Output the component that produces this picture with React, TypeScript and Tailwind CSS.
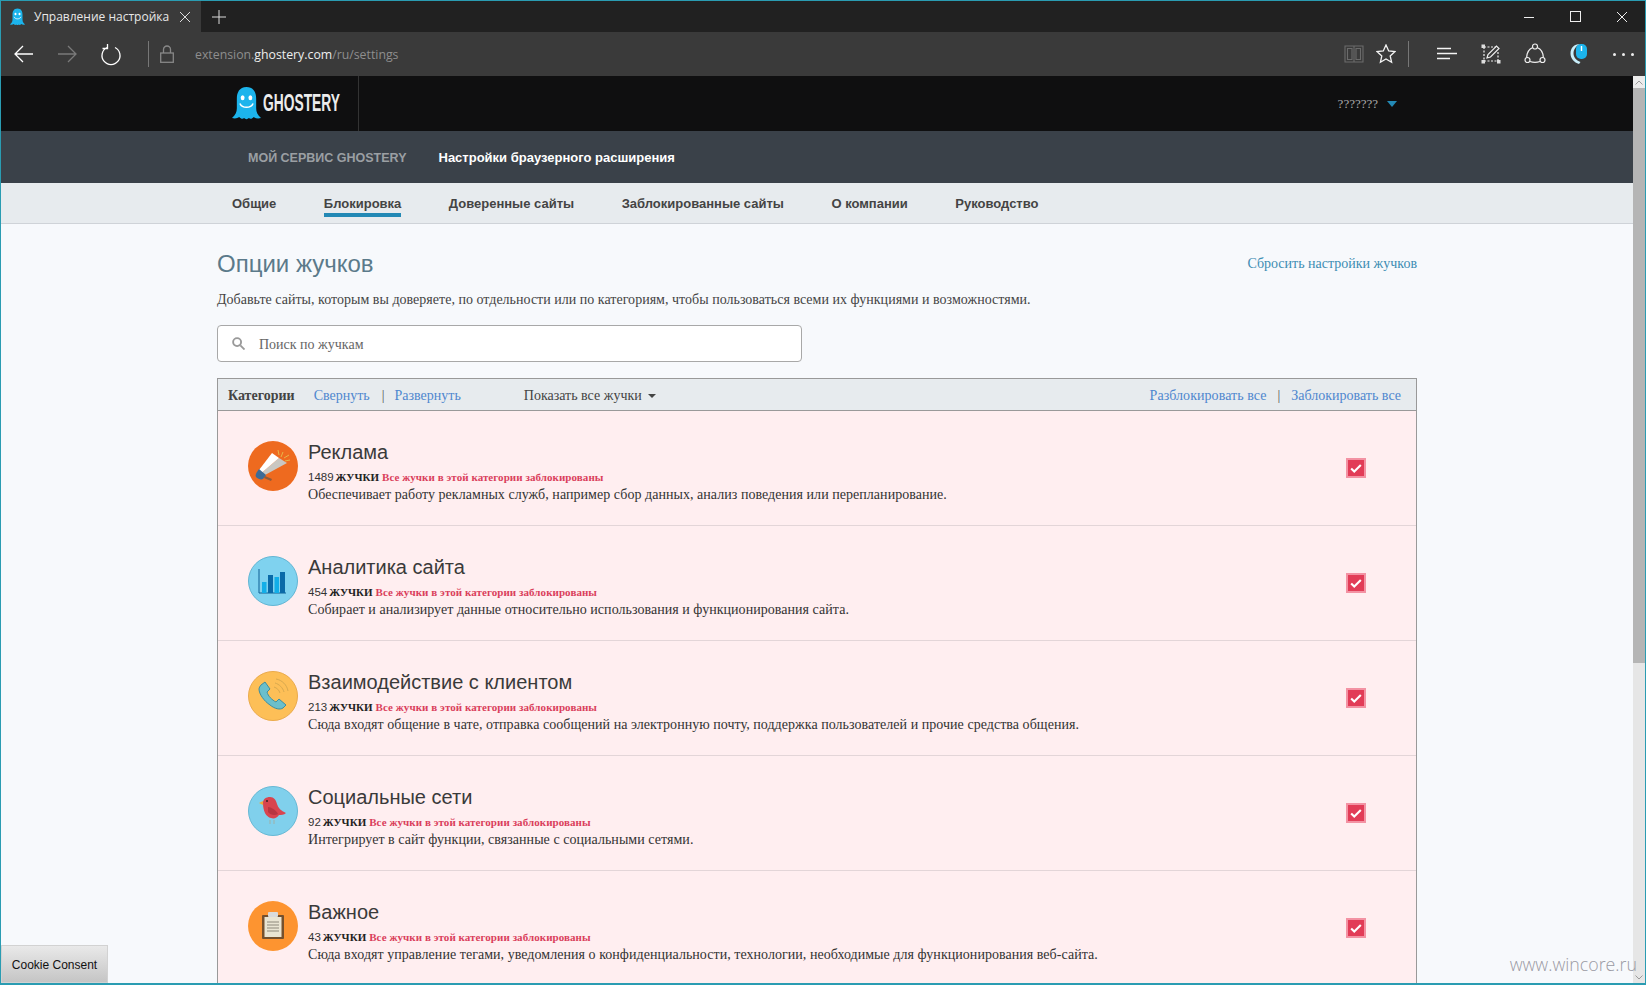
import type { ReactNode } from "react";

const SERIF = "font-['Liberation_Serif',serif]";
const SANS = "font-['Liberation_Sans',sans-serif]";

function GhostLogo({ className }: { className: string }) {
  return (
    <svg viewBox="0 0 30 34" className={className}>
      <path
        d="M15 0C7.5 0 5 6 5 12v10c0 4-1.5 7-5 10 3 .8 5.5.4 7.5-1 1.6 1.8 3.6 2.5 5 1 1.4 1.6 3.4 1.6 5 0 1.4 1.5 3.4.8 5-1 2 1.4 4.5 1.8 7.5 1-3.5-3-5-6-5-10V12C25 6 22.5 0 15 0z"
        fill="#1cb4ec"
      />
      <ellipse cx="11" cy="11" rx="2" ry="2.6" fill="#fff" />
      <ellipse cx="19" cy="11" rx="2" ry="2.6" fill="#fff" />
      <path d="M8.5 17.5c2 4.5 11 4.5 13 0" fill="none" stroke="#fff" strokeWidth="1.6" strokeLinecap="round" />
    </svg>
  );
}

function Stroke({ w, children, className = "" }: { w: number; children: ReactNode; className?: string }) {
  return (
    <svg viewBox={`0 0 ${w} 24`} width={w} height={24} fill="none" stroke="currentColor" strokeWidth="1.3" className={className}>
      {children}
    </svg>
  );
}

function MegaphoneIcon() {
  return (
    <svg viewBox="0 0 50 50" className="w-[50px] h-[50px]">
      <circle cx="25" cy="25" r="25" fill="#ee6a1f" />
      <path d="M31 17l8 5-22 12-3-2.500z" fill="#c9c7c2" />
      <path d="M24 12l7 5-17 14.500-3-2.500z" fill="#fff" />
      <path d="M11 28l7 6-3 4c-2 1-5 0-7-2-1-2 0-4 3-8z" fill="#3d6b96" />
      <path d="M17 35l7 3-1 2-7-3z" fill="#8f5a3a" />
      <path d="M30 9l1 5M35 11l-2 5M41 14l-5 3M42 19l-5 1" stroke="#e7b64a" strokeWidth="1" />
    </svg>
  );
}

function ChartIcon() {
  return (
    <svg viewBox="0 0 50 50" className="w-[50px] h-[50px]">
      <circle cx="25" cy="25" r="24.500" fill="#7fd2ef" stroke="#62b5d3" />
      <path d="M11 13v24h27" fill="none" stroke="#0f5f94" strokeWidth="1" />
      <rect x="14" y="26" width="4.500" height="11" fill="#12aee8" />
      <rect x="20" y="19" width="5" height="18" fill="#0a6aa8" />
      <rect x="26.500" y="21" width="4.500" height="16" fill="#12aee8" />
      <rect x="32" y="16" width="5" height="21" fill="#0a6aa8" />
    </svg>
  );
}

function PhoneIcon() {
  return (
    <svg viewBox="0 0 50 50" className="w-[50px] h-[50px]">
      <circle cx="25" cy="25" r="24.500" fill="#fdbf57" stroke="#eaaa4c" />
      <path
        d="M13 14l4-3 5 7-3 3c1 4 5 8 9 10l3-3 7 6-3 3c-3 2-8 1-13-3-6-4-11-11-11-16 0-1 1-3 2-4z"
        fill="#6bbfcb"
        stroke="#3d8ea0"
        strokeWidth="1"
      />
      <path d="M26 16c3 1 5 3 6 6M27 12c4 1 8 5 9 9M28 8c6 1 11 6 12 12" fill="none" stroke="#d8a94f" strokeWidth="1" />
    </svg>
  );
}

function BirdIcon() {
  return (
    <svg viewBox="0 0 50 50" className="w-[50px] h-[50px]">
      <circle cx="25" cy="25" r="24.500" fill="#80d0ec" stroke="#66b8d4" />
      <path d="M15 17c0-4 3-6 7-6 4 0 6 3 7 7 1 4 4 7 9 9-2 2-5 2-7 2-2 3-5 4-8 3-5-1-8-7-8-15z" fill="#d8444f" />
      <path d="M20 21c3 0 8 3 10 7-3 2-8 1-10-2z" fill="#b83541" />
      <path d="M15 15l-4 2 4 2z" fill="#eeaa3a" />
      <path d="M22 34v4M26 34v4" stroke="#9fb0a8" strokeWidth="1" />
      <circle cx="19" cy="15" r="1" fill="#3a2020" />
    </svg>
  );
}

function ClipboardIcon() {
  return (
    <svg viewBox="0 0 50 50" className="w-[50px] h-[50px]">
      <circle cx="25" cy="25" r="25" fill="#fd9430" />
      <rect x="14" y="14" width="22" height="24" rx="1" fill="#75512e" />
      <rect x="16.500" y="16" width="17" height="20" fill="#e9e5d3" />
      <rect x="20" y="11" width="10" height="5" rx="1" fill="#d9dbdb" />
      <path d="M19 21h12M19 24h12M19 27h12M19 30h12" stroke="#8d8a7d" strokeWidth="1.200" />
    </svg>
  );
}

const categories = [
  { name: "Реклама", count: "1489", desc: "Обеспечивает работу рекламных служб, например сбор данных, анализ поведения или перепланирование.", icon: <MegaphoneIcon /> },
  { name: "Аналитика сайта", count: "454", desc: "Собирает и анализирует данные относительно использования и функционирования сайта.", icon: <ChartIcon /> },
  { name: "Взаимодействие с клиентом", count: "213", desc: "Сюда входят общение в чате, отправка сообщений на электронную почту, поддержка пользователей и прочие средства общения.", icon: <PhoneIcon /> },
  { name: "Социальные сети", count: "92", desc: "Интегрирует в сайт функции, связанные с социальными сетями.", icon: <BirdIcon /> },
  { name: "Важное", count: "43", desc: "Сюда входят управление тегами, уведомления о конфиденциальности, технологии, необходимые для функционирования веб-сайта.", icon: <ClipboardIcon /> },
];

const tabs = ["Общие", "Блокировка", "Доверенные сайты", "Заблокированные сайты", "О компании", "Руководство"];

function CategoryRow({ name, count, desc, icon }: { name: string; count: string; desc: string; icon: ReactNode }) {
  return (
    <div className="h-[115px] shrink-0 flex pl-[30px] pr-[50px] bg-[#ffeef0] border-b border-[#e3d5d8]">
      <div className="mt-[30px] w-[50px] h-[50px] shrink-0">{icon}</div>
      <div className="ml-[10px] flex-1 pt-[29px]">
        <div className={`${SANS} text-[20px] leading-[24px] text-[#3a3a3a]`}>{name}</div>
        <div className="mt-[5px] leading-[16px] h-[16px] flex items-baseline whitespace-nowrap">
          <span className={`${SANS} text-[11.5px] text-[#333]`}>{count}</span>
          <span className={`${SERIF} text-[11px] font-bold text-[#222] ml-[2px]`}>ЖУЧКИ</span>
          <span className={`${SERIF} text-[11px] font-bold text-[#da3f5c] ml-[3px] tracking-[0.06px]`}>
            Все жучки в этой категории заблокированы
          </span>
        </div>
        <div className={`${SERIF} text-[14px] leading-[18px] mt-[1px] text-[#333] whitespace-nowrap tracking-[0.04px]`}>{desc}</div>
      </div>
      <div className="mt-[47px] w-[20px] h-[20px] shrink-0 bg-[#e23c57] border-2 border-[#f392a3] flex items-center justify-center">
        <svg viewBox="0 0 16 16" className="w-[14px] h-[14px]">
          <path d="M2.500 8.500l3.500 3.500 7.500-7.500" fill="none" stroke="#fff" strokeWidth="2.400" />
        </svg>
      </div>
    </div>
  );
}

export default function App() {
  return (
    <div className="relative w-[1646px] h-[985px] overflow-hidden flex flex-col border-x border-t border-b-2 border-[#2a9cb2] bg-[#f7f9fc]">
      {/* Browser tab strip */}
      <div className={`h-[31px] shrink-0 flex items-center bg-[#212121] text-[#e8e8e8] ${SANS}`}>
        <div className="w-[200px] h-full bg-[#3a3a3a] flex items-center pl-[9px]">
          <GhostLogo className="w-[15px] h-[18px] shrink-0" />
          <span className="ml-[9px] font-['Open_Sans',sans-serif] text-[12px] whitespace-nowrap">Управление настройка</span>
          <svg viewBox="0 0 12 12" className="w-[12px] h-[12px] ml-[10px]" stroke="#ddd" strokeWidth="1">
            <path d="M1 1l10 10M11 1L1 11" />
          </svg>
        </div>
        <svg viewBox="0 0 14 14" className="w-[14px] h-[14px] ml-[11px]" stroke="#ddd" strokeWidth="1">
          <path d="M7 0v14M0 7h14" />
        </svg>
        <div className="flex-1" />
        <svg viewBox="0 0 12 12" className="w-[12px] h-[12px] mr-[35px]" stroke="#eee" strokeWidth="1">
          <path d="M1 6.500h10" />
        </svg>
        <svg viewBox="0 0 11 11" className="w-[11px] h-[11px] mr-[35px]" fill="none" stroke="#eee" strokeWidth="1">
          <rect x=".5" y=".5" width="10" height="10" />
        </svg>
        <svg viewBox="0 0 12 12" className="w-[12px] h-[12px] mr-[17px]" stroke="#eee" strokeWidth="1">
          <path d="M1 1l10 10M11 1L1 11" />
        </svg>
      </div>

      {/* Browser toolbar */}
      <div className="h-[44px] shrink-0 flex items-center bg-[#3a3a3a] text-white">
        <Stroke w={24} className="ml-[11px]">
          <path d="M21 12H3M11 4l-8 8 8 8" />
        </Stroke>
        <Stroke w={24} className="ml-[19px] text-[#7a7a7a]">
          <path d="M3 12h18M13 4l8 8-8 8" />
        </Stroke>
        <Stroke w={24} className="ml-[19px]">
          <path d="M8 4.500a9 9 0 1 0 8 0M8.500 1v4.500H3.500" transform="translate(1 1)" />
        </Stroke>
        <div className="ml-[26px] w-px h-[26px] bg-[#777]" />
        <svg viewBox="0 0 14 18" className="w-[14px] h-[18px] ml-[11px]" fill="none" stroke="#888" strokeWidth="1.300">
          <rect x=".7" y="8" width="12.600" height="9.300" />
          <path d="M3.500 8V4.500a3.500 3.500 0 0 1 7 0V8" />
        </svg>
        <div className="ml-[21px] pt-[2px] font-['Open_Sans',sans-serif] text-[12.300px] text-[#8e8e8e] whitespace-nowrap">
          extension.<span className="text-[#eee]">ghostery.com</span>/ru/settings
        </div>
        <div className="flex-1" />
        <svg viewBox="0 0 20 20" className="w-[20px] h-[20px]" fill="none" stroke="#6b6b6b" strokeWidth="1.100">
          <path d="M1 2h18v16H1zM10 2v16M3.500 4.500h4.500v11H3.500zM12 4.500h4.500v11H12z" />
        </svg>
        <svg viewBox="0 0 20 20" className="w-[20px] h-[20px] ml-[12px]" fill="none" stroke="#f4f4f4" strokeWidth="1.300">
          <path d="M10 1l2.700 6 6.300.6-4.800 4.300 1.400 6.400L10 15l-5.600 3.300 1.400-6.400L1 7.600 7.300 7z" />
        </svg>
        <div className="ml-[12px] w-px h-[26px] bg-[#777]" />
        <svg viewBox="0 0 20 14" className="w-[20px] h-[14px] ml-[28px]" stroke="#f4f4f4" strokeWidth="1.300">
          <path d="M0 1.500h14M0 6.500h20M0 11.500h13" />
        </svg>
        <svg viewBox="0 0 20 20" className="w-[20px] h-[20px] ml-[24px]" fill="none" stroke="#eee" strokeWidth="1.200">
          <path d="M3 3h12M3 17h14M3 3v14M17 8v9" strokeDasharray="2 1.500" />
          <rect x="0.500" y="0.500" width="3.500" height="3.500" fill="#ddd" stroke="none" />
          <rect x="0.500" y="16" width="3.500" height="3.500" fill="#ddd" stroke="none" />
          <rect x="16" y="16" width="3.500" height="3.500" fill="#ddd" stroke="none" />
          <path d="M6 14l1-3.500L15.500 2 18 4.500 9.500 13z" />
        </svg>
        <svg viewBox="0 0 22 22" className="w-[22px] h-[22px] ml-[23px]" fill="none" stroke="#eee" strokeWidth="1.200">
          <circle cx="11" cy="3.500" r="2.500" />
          <circle cx="3.500" cy="17" r="2.500" />
          <circle cx="18.500" cy="17" r="2.500" />
          <path d="M8.800 4.500C5 6 2.800 10 2.600 14.600M13.200 4.500c3.800 1.500 6 5.500 6.200 10.100M6 18.500c3 1 7 1 10 0" />
        </svg>
        <svg viewBox="0 0 18 22" className="w-[18px] h-[22px] ml-[24px]">
          <path d="M10 1C4 1 .5 5 .5 10.500c0 5 3.500 9 8.500 10.500l1.500-2C6 17.500 3.500 14 3.500 10.500 3.500 6.500 6 3 10 1z" fill="#c8eefa" />
          <rect x="6" y="1" width="11" height="15" rx="5" fill="#1cb4ec" />
          <path d="M11.500 3v5" stroke="#fff" strokeWidth="1.400" />
        </svg>
        <div className="ml-[25px] mr-[11px] flex gap-[6px]">
          <div className="w-[3px] h-[3px] rounded-full bg-[#eee]" />
          <div className="w-[3px] h-[3px] rounded-full bg-[#eee]" />
          <div className="w-[3px] h-[3px] rounded-full bg-[#eee]" />
        </div>
      </div>

      <div className="flex-1 min-h-0 flex">
        {/* Page */}
        <div className="flex-1 min-w-0 flex flex-col overflow-hidden">
          <div className="h-[55px] shrink-0 bg-[#0f0f10] flex items-center">
            <div className="ml-[231px] w-[127px] h-full border-r border-[#333] flex items-center">
              <GhostLogo className="w-[29px] h-[33px] shrink-0" />
              <span className="block w-[80px] ml-[2px] origin-left scale-x-[0.6] font-['Liberation_Sans',sans-serif] font-bold text-[23px] text-[#ececec] whitespace-nowrap">
                GHOSTERY
              </span>
            </div>
            <div className="flex-1" />
            <span className={`${SERIF} text-[13px] text-[#a8a8a8]`}>???????</span>
            <div className="ml-[9px] mr-[236px] w-0 h-0 border-x-[5px] border-x-transparent border-t-[6px] border-t-[#2389b5]" />
          </div>
          <div className="h-[52px] shrink-0 bg-[#3a4149] flex items-center pl-[247px] pt-[2px] font-['Liberation_Sans',sans-serif] text-[13px]">
            <span className="font-bold text-[12.500px] text-[#9b9fa3]">МОЙ СЕРВИС GHOSTERY</span>
            <span className="ml-[32px] font-bold text-white">Настройки браузерного расширения</span>
          </div>
          <div className="h-[41px] shrink-0 bg-[#e7ebee] border-b border-[#cfd3d8] flex pl-[231px] gap-[47.500px] font-['Liberation_Sans',sans-serif] text-[13px] font-bold text-[#444]">
            {tabs.map((tab) => (
              <div
                key={tab}
                className={`h-[34px] flex items-center pt-[11px] border-b-[4px] ${tab === "Блокировка" ? "border-[#2389b5]" : "border-transparent"}`}
              >
                {tab}
              </div>
            ))}
          </div>

          <div className="flex-1 min-h-0 pl-[216px] pr-[216px]">
            <div className="flex items-start justify-between mt-[24px] h-[32px]">
              <div className={`${SANS} text-[24px] leading-[32px] text-[#5b7a8a]`}>Опции жучков</div>
              <div className={`${SERIF} text-[14px] text-[#3d8db3] leading-[32px]`}>Сбросить настройки жучков</div>
            </div>
            <div className={`${SERIF} text-[14px] leading-[18px] mt-[11px] text-[#444] whitespace-nowrap tracking-[0.017px]`}>
              Добавьте сайты, которым вы доверяете, по отдельности или по категориям, чтобы пользоваться всеми их функциями и возможностями.
            </div>
            <div className="mt-[16px] w-[585px] h-[37px] bg-white border border-[#a8a8a8] rounded-[4px] flex items-center pl-[14px]">
              <svg viewBox="0 0 14 14" className="w-[13px] h-[13px]" fill="none" stroke="#999" strokeWidth="2">
                <circle cx="5.500" cy="5.500" r="4.300" />
                <path d="M9 9l4.500 4.500" />
              </svg>
              <span className={`${SERIF} ml-[14px] pt-[1px] text-[14px] text-[#666]`}>Поиск по жучкам</span>
            </div>
            <div className="mt-[16px] border-x border-t border-[#999] flex flex-col">
              <div className={`h-[32px] shrink-0 bg-[#e7ebee] border-b border-[#999] flex items-center pl-[10px] pr-[15px] pt-[2px] ${SERIF} text-[14px] text-[#4f87cf] whitespace-nowrap`}>
                <span className="font-bold text-[#444]">Категории</span>
                <span className="ml-[19px]">Свернуть</span>
                <span className="ml-[12px] text-[#555]">|</span>
                <span className="ml-[10px]">Развернуть</span>
                <span className="ml-[63px] text-[#444]">Показать все жучки</span>
                <div className="ml-[6px] w-0 h-0 border-x-[4px] border-x-transparent border-t-[4px] border-t-[#444]" />
                <div className="flex-1" />
                <span className="tracking-[0.05px]">Разблокировать все</span>
                <span className="ml-[11px] text-[#555]">|</span>
                <span className="ml-[11px]">Заблокировать все</span>
              </div>
              {categories.map((c) => (
                <CategoryRow key={c.name} {...c} />
              ))}
            </div>
          </div>
        </div>

        {/* Scrollbar */}
        <div className="w-[12px] shrink-0 flex flex-col bg-[#e6e6e6]">
          <div className="h-[12px] shrink-0 bg-[#ececec] flex items-center justify-center">
            <svg viewBox="0 0 8 5" className="w-[8px] h-[5px]" fill="none" stroke="#9a9a9a">
              <path d="M.5 4.500L4 1l3.500 3.500" />
            </svg>
          </div>
          <div className="h-[575px] shrink-0 bg-[#b5b5b5]" />
          <div className="flex-1" />
          <div className="h-[12px] shrink-0 flex items-center justify-center">
            <svg viewBox="0 0 8 5" className="w-[8px] h-[5px]" fill="none" stroke="#9a9a9a">
              <path d="M.5.500L4 4l3.500-3.500" />
            </svg>
          </div>
        </div>
      </div>

      {/* Overlays */}
      <div className="absolute left-0 bottom-0 w-[107px] h-[38px] flex items-center justify-center pt-[1px] bg-gradient-to-b from-[#e9e9e9] to-[#c5c5c5] border border-[#d2d2d2] font-['Liberation_Sans',sans-serif] text-[12px] text-[#111]">
        Cookie Consent
      </div>
      <div className="absolute right-[8px] bottom-[5px] font-['Open_Sans',sans-serif] font-light text-[17.800px] text-[#9a9aa3]">
        www.wincore.ru
      </div>
    </div>
  );
}
